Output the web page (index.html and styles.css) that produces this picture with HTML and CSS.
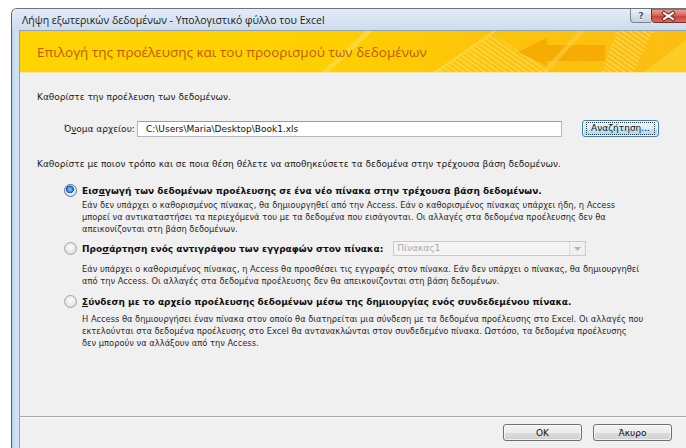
FILE: index.html
```html
<!DOCTYPE html>
<html lang="el">
<head>
<meta charset="utf-8">
<title>Λήψη εξωτερικών δεδομένων</title>
<link rel="stylesheet" href="styles.css">
</head>
<body>
<div class="window">
  <div class="titlebar">
    <span class="title">Λήψη εξωτερικών δεδομένων - Υπολογιστικό φύλλο του Excel</span>
    <div class="caption-buttons">
      <span class="help-btn">?</span>
      <svg class="close-btn" width="36" height="14" viewBox="0 0 36 14">
        <defs>
          <linearGradient id="closeFill" x1="0" x2="0" y1="0" y2="1">
            <stop offset="0" stop-color="#eba597"/>
            <stop offset="0.45" stop-color="#d9695b"/>
            <stop offset="0.55" stop-color="#c7463a"/>
            <stop offset="1" stop-color="#d77363"/>
          </linearGradient>
        </defs>
        <path d="M0.5 0 V10 Q0.5 13.5 4 13.5 H36 V0 Z" fill="url(#closeFill)" stroke="#7c2d24"/>
        <path d="M13 4 L22 10 M22 4 L13 10" stroke="#5e241c" stroke-width="3.8" stroke-linecap="square"/>
        <path d="M13 4 L22 10 M22 4 L13 10" stroke="#ffffff" stroke-width="2.1" stroke-linecap="square"/>
      </svg>
    </div>
  </div>
  <div class="client">
    <div class="banner">
      <svg class="banner-art" width="666" height="42" viewBox="0 0 666 42" preserveAspectRatio="none">
        <defs>
          <linearGradient id="bg" x1="0" x2="1" y1="0" y2="0">
            <stop offset="0" stop-color="#ffd500"/>
            <stop offset="0.45" stop-color="#ffd000"/>
            <stop offset="0.7" stop-color="#fdc40a"/>
            <stop offset="1" stop-color="#fbbd12"/>
          </linearGradient>
          <pattern id="hatch" width="4" height="4" patternUnits="userSpaceOnUse" patternTransform="rotate(-55)">
            <rect width="1.3" height="4" fill="#ffe27a" opacity="0.7"/>
          </pattern>
        </defs>
        <rect width="666" height="42" fill="url(#bg)"/>
        <path d="M300 42 L345 0 L352 0 L307 42 Z" fill="#ffe066" opacity="0.55"/>
        <path d="M412 42 L472 0 L476 0 L416 42 Z" fill="#ffe066" opacity="0.5"/>
        <path d="M410 42 L472 3 L532 42 Z" fill="url(#hatch)"/>
        <path d="M497 21 L526 7 L526 14 L584 14 L584 30 L526 30 L526 35 Z" fill="#f5a300" opacity="0.7"/>
        <path d="M520 42 L558 0 L564 0 L526 42 Z" fill="#ffd24d" opacity="0.55"/>
        <path d="M596 0 L632 0 L612 42 L580 42 Z" fill="url(#hatch)"/>
        <path d="M622 42 L666 8 L666 42 Z" fill="#ffd633" opacity="0.6"/>
        <rect y="41" width="666" height="1" fill="#f3e4aa"/>
      </svg>
      <h1 class="banner-title">Επιλογή της προέλευσης και του προορισμού των δεδομένων</h1>
    </div>

    <div class="content">
      <p class="line">Καθορίστε την προέλευση των δεδομένων.</p>

      <div class="file-row">
        <label class="file-label">Ό<u>ν</u>ομα αρχείου:</label>
        <div class="textbox">C:\Users\Maria\Desktop\Book1.xls</div>
        <button class="btn btn-focus"><span class="focus-ring">Αναζήτηση...</span></button>
      </div>

      <p class="line line-how">Καθορίστε με ποιον τρόπο και σε ποια θέση θέλετε να αποθηκεύσετε τα δεδομένα στην τρέχουσα βάση δεδομένων.</p>

      <div class="opt opt-import">
        <span class="radio radio-on"></span>
        <span class="opt-head">Εισ<u>α</u>γωγή των δεδομένων προέλευσης σε ένα νέο πίνακα στην τρέχουσα βάση δεδομένων.</span>
        <p class="opt-desc">Εάν δεν υπάρχει ο καθορισμένος πίνακας, θα δημιουργηθεί από την Access. Εάν ο καθορισμένος πίνακας υπάρχει ήδη, η Access<br>μπορεί να αντικαταστήσει τα περιεχόμενά του με τα δεδομένα που εισάγονται. Οι αλλαγές στα δεδομένα προέλευσης δεν θα<br>απεικονίζονται στη βάση δεδομένων.</p>
      </div>

      <div class="opt opt-append">
        <span class="radio"></span>
        <span class="opt-head opt-head-combo">Προ<u>σ</u>άρτηση ενός αντιγράφου των εγγραφών στον πίνακα:
          <span class="combo"><span class="combo-text">Πίνακας1</span><span class="combo-arrow"><svg width="7" height="4" viewBox="0 0 7 4"><path d="M0 0 H7 L3.5 4 Z" fill="#b4b4b4"/></svg></span></span>
        </span>
        <p class="opt-desc">Εάν υπάρχει ο καθορισμένος πίνακας, η Access θα προσθέσει τις εγγραφές στον πίνακα. Εάν δεν υπάρχει ο πίνακας, θα δημιουργηθεί<br>από την Access. Οι αλλαγές στα δεδομένα προέλευσης δεν θα απεικονίζονται στη βάση δεδομένων.</p>
      </div>

      <div class="opt opt-link">
        <span class="radio"></span>
        <span class="opt-head"><u>Σ</u>ύνδεση με το αρχείο προέλευσης δεδομένων μέσω της δημιουργίας ενός συνδεδεμένου πίνακα.</span>
        <p class="opt-desc">Η Access θα δημιουργήσει έναν πίνακα στον οποίο θα διατηρείται μια σύνδεση με τα δεδομένα προέλευσης στο Excel. Οι αλλαγές που<br>εκτελούνται στα δεδομένα προέλευσης στο Excel θα αντανακλώνται στον συνδεδεμένο πίνακα. Ωστόσο, τα δεδομένα προέλευσης<br>δεν μπορούν να αλλάξουν από την Access.</p>
      </div>
    </div>

    <div class="footer">
      <button class="btn btn-wide">OK</button>
      <button class="btn btn-wide">Άκυρο</button>
    </div>
  </div>
</div>
</body>
</html>
```

FILE: styles.css
```css
html, body {
  margin: 0;
  height: 100%;
  overflow: hidden;
  background: #fff;
}

body {
  font-family: "DejaVu Sans", sans-serif;
  font-size: 9px;
  color: #1a1a1a;
}

u { text-decoration: underline; text-underline-offset: 1px; }

/* window frame */
.window {
  width: 675px;
  margin: 8px 0 0 11px;
  height: 447px;
  display: flex;
  flex-direction: column;
  border-top: 1px solid #6d737c;
  border-left: 1px solid #5c6168;
  border-top-left-radius: 6px;
  background: linear-gradient(to right, #bcd2ea 0, #d3e3f3 4px, #c9dcf0 8px);
}

.titlebar {
  height: 21px;
  flex: none;
  display: flex;
  align-items: flex-start;
  justify-content: space-between;
  background: linear-gradient(#e3ecf7, #cddcee);
  border-top-left-radius: 5px;
}

.title {
  padding: 4px 0 0 10px;
  font-family: "Open Sans", "DejaVu Sans", sans-serif;
  font-size: 10.5px;
  line-height: 14px;
  color: #1b1b1b;
  white-space: nowrap;
}

/* caption buttons */
.caption-buttons {
  display: flex;
  align-items: flex-start;
  flex: none;
}

.help-btn {
  width: 21px;
  height: 14px;
  box-sizing: border-box;
  display: flex;
  align-items: center;
  justify-content: center;
  border: 1px solid #7b8796;
  border-top: none;
  border-right: none;
  border-bottom-left-radius: 4px;
  background: linear-gradient(#edf2f8, #d7e0ea 50%, #c6d1de);
  font-family: "DejaVu Sans", sans-serif;
  font-size: 9px;
  font-weight: bold;
  color: #4a5463;
  text-shadow: 0 1px 0 #fff;
}

.close-btn {
  display: block;
  flex: none;
}

/* client area */
.client {
  flex: 1;
  margin-left: 7px;
  display: flex;
  flex-direction: column;
  border-top: 1px solid #8fa3bb;
  border-left: 1px solid #8fa3bb;
  background: #f0f0f0;
}

.banner {
  height: 42px;
  flex: none;
  display: grid;
  align-items: center;
}

.banner-art,
.banner-title {
  grid-area: 1 / 1;
}

.banner-art {
  display: block;
  width: 100%;
  height: 42px;
}

.banner-title {
  margin: 0 0 0 17px;
  font-family: "Open Sans", "DejaVu Sans", sans-serif;
  font-size: 13.5px;
  font-weight: normal;
  color: #bf5b00;
  line-height: 18px;
}

.content {
  flex: 1;
  padding: 18px 0 0 17px;
}

.line {
  margin: 0;
  line-height: 12px;
  white-space: nowrap;
}

.file-row {
  margin: 17px 0 0 27px;
  height: 17px;
  display: flex;
  align-items: center;
}

.file-label {
  width: 73px;
}

.textbox {
  width: 425px;
  height: 16px;
  box-sizing: border-box;
  padding: 0 0 0 8px;
  line-height: 14px;
  background: #fff;
  border: 1px solid #b4b6bb;
  border-top-color: #9a9da3;
  color: #111;
}

.btn {
  font-family: "DejaVu Sans", sans-serif;
  font-size: 9px;
  color: #111;
  height: 17px;
  padding: 0;
  border: 1px solid #707070;
  border-radius: 3px;
  background: linear-gradient(#f3f3f3, #ebebeb 50%, #dddddd 51%, #d0d0d0);
  box-shadow: inset 0 0 0 1px rgba(255, 255, 255, 0.7);
}

.btn-focus {
  margin-left: 20px;
  width: 77px;
  border-color: #3c7fb1;
  background: linear-gradient(#eaf6fd, #d9f0fc 50%, #bee6fd 51%, #a7d9f5);
  display: flex;
  align-items: center;
  justify-content: center;
}

.focus-ring {
  display: block;
  padding: 0 4px;
  line-height: 11px;
  outline: 1px dotted #333;
}

.line-how {
  margin-top: 21px;
}

/* import options */
.opt {
  margin-left: 27px;
  display: grid;
  grid-template-columns: 18px auto;
  align-items: center;
}

.opt-import { margin-top: 14px; }
.opt-append { margin-top: 6px; }
.opt-link { margin-top: 8px; }

.radio {
  width: 13px;
  height: 13px;
  box-sizing: border-box;
  border-radius: 50%;
  border: 1px solid #a4a4a4;
  background: radial-gradient(circle at 50% 40%, #fdfdfd 0, #e8e8e8 55%, #d2d2d2 100%);
}

.radio-on {
  border-color: #557393;
  background:
    radial-gradient(circle at 45% 40%, #8fd3ff 0, #2f86d4 30%, #14479a 42%, transparent 46%),
    radial-gradient(circle at 50% 40%, #fdfdfd 0, #e3ecf5 60%, #c7d3df 100%);
}

.opt-head {
  font-weight: bold;
  line-height: 12px;
  color: #111;
  white-space: nowrap;
}

.opt-head-combo {
  display: flex;
  align-items: center;
  height: 15px;
}

.combo {
  margin-left: 10px;
  width: 193px;
  height: 15px;
  box-sizing: border-box;
  display: flex;
  border: 1px solid #c9c9c9;
  background: #f4f4f4;
  font-weight: normal;
}

.combo-text {
  flex: 1;
  padding-left: 3px;
  line-height: 13px;
  color: #a8a8a8;
}

.combo-arrow {
  width: 15px;
  display: flex;
  align-items: center;
  justify-content: center;
  border-left: 1px solid #dedede;
  background: #f0f0f0;
}

.opt-desc {
  grid-column: 2;
  margin: 2px 0 0;
  font-size: 8.3px;
  line-height: 12px;
  color: #2a2a2a;
  white-space: nowrap;
}

.opt-append .opt-desc { margin-top: 7px; }
.opt-link .opt-desc { margin-top: 5px; }

/* dialog buttons */
.footer {
  height: 40px;
  flex: none;
  box-sizing: border-box;
  border-top: 1px solid #a7a7a7;
  box-shadow: inset 0 1px 0 #fbfbfb;
  padding: 7px 15px 0 0;
  display: flex;
  justify-content: flex-end;
  align-items: flex-start;
  gap: 11px;
}

.btn-wide {
  width: 79px;
}
```
